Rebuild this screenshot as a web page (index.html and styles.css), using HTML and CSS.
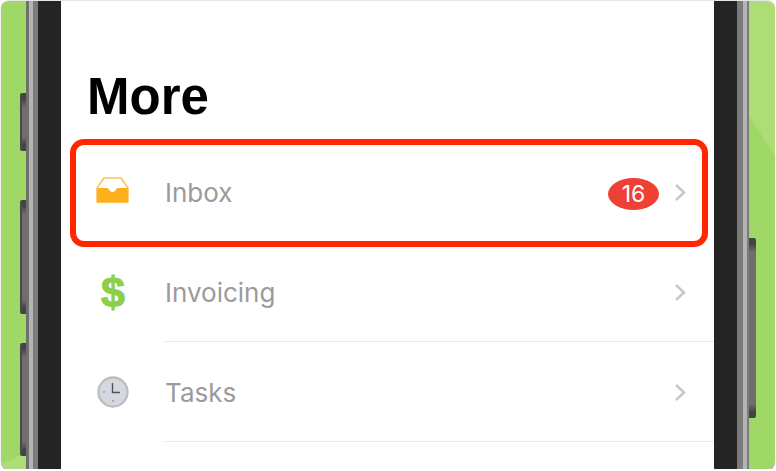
FILE: index.html
```html
<!DOCTYPE html>
<html lang="en">
  <head>
    <meta charset="UTF-8" />
    <title>More</title>
    <link rel="stylesheet" href="styles.css">
  </head>

  <body>
    <div class="window">
      <div class="backdrop backdrop-left">
        <span class="side-btn btn-mute"></span>
        <span class="side-btn btn-up"></span>
        <span class="side-btn btn-down"></span>
      </div>
      <div class="rim rim-left"></div>
      <div class="bezel"></div>

      <main class="screen">
        <h1 class="title">More</h1>
        <ul class="menu">
          <li class="row row-inbox">
            <span class="icon icon-inbox">
              <svg width="33" height="26" viewBox="0 0 33 26">
                <path d="M1 11 8 1h17l7 10v14H1z" fill="#fff" stroke="#fbc35a" stroke-width="1.600" stroke-linejoin="round"/>
                <path d="M1 11h10c1 0 1.500 .6 2 1.500.7 1.500 1.800 2.500 3.500 2.500s2.800-1 3.500-2.500c.5-.9 1-1.500 2-1.500h10v14.500H1z" fill="#fdb01b"/>
              </svg>
            </span>
            <span class="label">Inbox</span>
            <span class="badge">16</span>
            <svg class="chevron" width="12" height="19" viewBox="0 0 12 19"><path d="M2 2l8 7.500L2 17"/></svg>
          </li>
          <li class="row row-invoicing">
            <span class="icon dollar">$</span>
            <span class="label">Invoicing</span>
            <svg class="chevron" width="12" height="19" viewBox="0 0 12 19"><path d="M2 2l8 7.500L2 17"/></svg>
          </li>
          <li class="row row-tasks">
            <span class="icon">
              <svg width="32" height="32" viewBox="0 0 32 32">
                <circle cx="16" cy="16" r="14.500" fill="#d5d9df" stroke="#bcbec1" stroke-width="2.400"/>
                <path d="M15.500 7v9.500H23" fill="none" stroke="#4f535b" stroke-width="1.400"/>
                <circle cx="7" cy="16" r="1" fill="#9a9ea5"/>
                <circle cx="16" cy="25" r="1" fill="#9a9ea5"/>
              </svg>
            </span>
            <span class="label">Tasks</span>
            <svg class="chevron" width="12" height="19" viewBox="0 0 12 19"><path d="M2 2l8 7.500L2 17"/></svg>
          </li>
        </ul>
      </main>

      <div class="bezel"></div>
      <div class="rim rim-right"></div>
      <div class="backdrop backdrop-right">
        <span class="side-btn btn-power"></span>
      </div>

      <div class="highlight"></div>
    </div>
  </body>
</html>
```

FILE: styles.css
```css
* {
  box-sizing: border-box;
}

body {
  margin: 0;
  background-color: #fff;
  font-family: Inter, "Noto Sans", sans-serif;
}

.window {
  position: relative;
  display: flex;
  width: 774px;
  height: 469px;
  margin-left: 1px;
  overflow: hidden;
  border-top: 1px solid #e6e6e6;
  border-radius: 8px;
  box-shadow: 0 1px 1px #777;
}

.backdrop {
  position: relative;
  flex: none;
  width: 25px;
}

.backdrop-left {
  background: linear-gradient(336deg, #aedd78 14px, #9fd866 15px);
}

.backdrop-right {
  width: 26px;
  background: linear-gradient(57deg, #9fd866 192px, #aedd78 193px);
}

.rim {
  flex: none;
  width: 12px;
}

.rim-left {
  background: linear-gradient(90deg, #6f6f6f 0 3px, #b4b4b4 3px 7px, #7b7b7b 7px);
}

.rim-right {
  background: linear-gradient(90deg, #7b7b7b 0 6px, #b4b4b4 6px 10px, #7b7b7b 10px);
}

.bezel {
  flex: none;
  width: 23px;
  background-color: #242424;
}

.side-btn {
  position: absolute;
  width: 6px;
  background: linear-gradient(180deg, #444 0 6px, #6e6e6e 14px, #6e6e6e calc(100% - 14px), #444 calc(100% - 6px));
}

.backdrop-left .side-btn {
  right: 0;
  border-left: 2px solid #4a4a4a;
  border-radius: 2px 0 0 2px;
}

.btn-mute {
  top: 92px;
  height: 58px;
}

.btn-up {
  top: 199px;
  height: 114px;
}

.btn-down {
  top: 342px;
  height: 113px;
}

.btn-power {
  top: 237px;
  left: 0;
  width: 7px;
  height: 180px;
  border-radius: 0 2px 2px 0;
}

.screen {
  flex: 1;
  min-width: 0;
  background-color: #fff;
}

.title {
  margin: 0;
  padding: 66px 0 0 26px;
  height: 139px;
  font-family: "Liberation Sans", sans-serif;
  font-size: 51px;
  line-height: 60px;
  font-weight: 700;
  color: #000;
}

.menu {
  margin: 0;
  padding: 0;
  list-style: none;
}

.row {
  position: relative;
  display: flex;
  align-items: center;
  padding-right: 28px;
  color: #9b9b9b;
  font-size: 26px;
}

.row-inbox {
  height: 102px;
  padding-top: 2px;
}

.row-invoicing,
.row-tasks {
  height: 100px;
}

.row-invoicing::after,
.row-tasks::after {
  content: "";
  position: absolute;
  left: 104px;
  right: 0;
  bottom: 0;
  height: 1px;
  background-color: #e8e8e8;
}

.icon {
  flex: none;
  display: flex;
  justify-content: center;
  align-items: center;
  width: 104px;
}

.icon-inbox {
  padding: 0 2px 5px 0;
}

.dollar {
  font-family: "Liberation Sans", sans-serif;
  font-size: 43px;
  font-weight: 700;
  color: #8ccf4b;
  -webkit-text-stroke: 1px #8ccf4b;
}

.label {
  flex: 1;
}

.badge {
  width: 51px;
  height: 32px;
  margin: 3px 15px 0 0;
  border-radius: 50%;
  background-color: #ee4035;
  color: #fff;
  font-size: 23px;
  line-height: 32px;
  text-align: center;
}

.chevron {
  fill: none;
  stroke: #c8c8c8;
  stroke-width: 2.500;
}

/* red annotation box round the inbox row */
.highlight {
  position: absolute;
  left: 69px;
  top: 138px;
  width: 638px;
  height: 108px;
  border: 6px solid #ff2600;
  border-radius: 14px;
}
```
